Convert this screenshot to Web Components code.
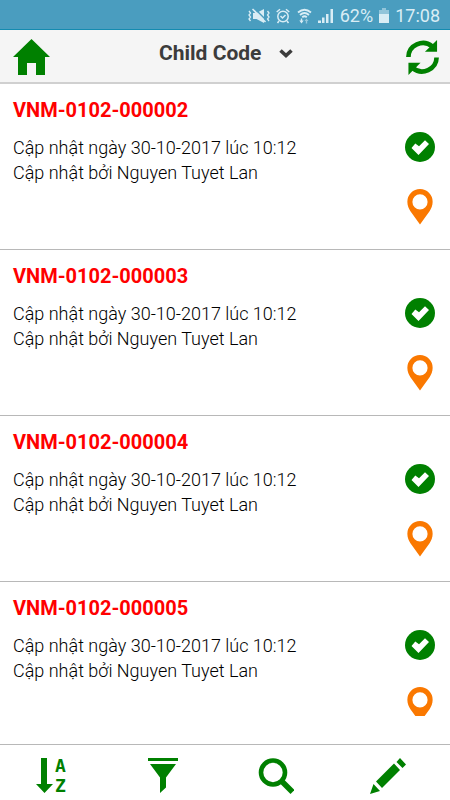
<!DOCTYPE html>
<html lang="vi">
<head>
<meta charset="utf-8">
<meta name="viewport" content="width=device-width, initial-scale=1">
<title>Child Code</title>
<style>
  html, body { height: 100%; margin: 0; }
  body { font-family: Roboto, "Noto Sans", sans-serif; color: #000; background: #fff; }
</style>
</head>
<body>
<code-app></code-app>

<script>
(function () {
  var RECORDS = ['VNM-0102-000002', 'VNM-0102-000003', 'VNM-0102-000004', 'VNM-0102-000005'];
  var RESET = ':host,*{box-sizing:border-box}svg{display:block}button{display:block;margin:0;padding:0;border:0;background:none;color:inherit;font:inherit;cursor:pointer}';

  // phone status bar: muted, alarm, wifi, signal, battery, clock
  class StatusBar extends HTMLElement {
    connectedCallback() {
      this.attachShadow({ mode: 'open' }).innerHTML = `
        <style>${RESET}
          :host { display: flex; align-items: center; justify-content: flex-end; flex: none; gap: 6px; height: 30px; padding: 2px 10px 0; background: #4a9dbf; border-bottom: 1px solid #148bb0; color: #d9edf5; font-size: 18px; line-height: 24px; }
        </style>
        <svg width="22" height="16" viewBox="0 0 22 16" fill="currentColor" aria-hidden="true">
          <path d="M5 5h3.500L16 1v14l-7.500-4H5z"/>
          <path d="M6 0l13 13" stroke="#4a9dbf" stroke-width="1.500"/>
          <path d="M4.500 1l13 13" fill="none" stroke="currentColor" stroke-width="1.600"/>
          <path d="M1 3l1.500 2L1 7l1.500 2L1 11l1.500 2M19.500 3L21 5l-1.500 2L21 9l-1.500 2 1.500 2" fill="none" stroke="currentColor" stroke-width="1.300"/>
        </svg>
        <svg width="14" height="16" viewBox="0 0 14 16" fill="none" stroke="currentColor" stroke-width="1.500" aria-hidden="true">
          <circle cx="7" cy="8.500" r="5.200"/><path d="M4.500 8l2 2L9.500 7M.7 4L4 1.200M13.300 4L10 1.200M3 13l-1.500 2M11 13l1.500 2"/>
        </svg>
        <svg width="16" height="16" viewBox="4 0 16 16" fill="none" stroke="currentColor" stroke-width="1.800" aria-hidden="true">
          <path d="M6 4.500q6.500-5.500 13 0M8 7q4.500-4 9 0M10.200 9.300q2.300-2 4.600 0"/>
          <path d="M9.500 15.500L7.300 12.500h1.500v-2h1.400v2h1.500z" fill="currentColor" stroke="none"/>
          <path d="M14.500 10.500l-2 2.500h1.300v2.500h1.400V13h1.300z" fill="currentColor" stroke="none" opacity=".55"/>
        </svg>
        <svg width="16" height="16" viewBox="0 0 16 16" fill="currentColor" aria-hidden="true">
          <path d="M0 12.500h3V15H0zM4 9.500h2.500V15H4zM8 6h2.500v9H8zM12.500 1H15v14h-2.500z"/>
        </svg>
        <span>62%</span>
        <svg width="10" height="16" viewBox="0 0 10 16" fill="currentColor" aria-hidden="true">
          <path d="M3 0h4v2H3zM0 2h10v4H0z" opacity=".5"/><path d="M0 6h10v9H0z"/>
        </svg>
        <span>17:08</span>`;
    }
  }

  class TopBar extends HTMLElement {
    connectedCallback() {
      this.attachShadow({ mode: 'open' }).innerHTML = `
        <style>${RESET}
          :host { display: grid; grid-template-columns: 1fr auto 1fr; align-items: center; flex: none; height: 54px; padding: 2px 11px 0 13px; background: #f5f5f5; border-bottom: 2px solid #d0d0d0; color: green; }
          .end { justify-self: end; }
          .start { justify-self: start; }
          label { display: flex; align-items: center; gap: 17px; padding-bottom: 8px; color: #3c3c3c; }
          select { appearance: none; margin: 0; padding: 0; border: 0; background: none; color: inherit; font: bold 21px/28px Roboto, sans-serif; }
          svg { pointer-events: none; }
        </style>
        <button class="start" aria-label="Home">
          <svg width="37" height="36" viewBox="0 0 37 36" fill="currentColor"><path d="M18.500 0L37 18h-5v18h-9V24h-9v12H5V18H0z"/></svg>
        </button>
        <label>
          <select aria-label="Code"><option>Child Code</option></select>
          <svg width="14" height="9" viewBox="0 0 14 9" fill="none" stroke="currentColor" stroke-width="3.600" aria-hidden="true"><path d="M1.500 1.500L7 6.500l5.500-5"/></svg>
        </label>
        <button class="end" aria-label="Refresh">
          <svg width="33" height="35" viewBox="0 0 34 36" fill="currentColor">
            <path d="M2.500 17.500A15 14.500 0 0 1 27 6.500" fill="none" stroke="currentColor" stroke-width="4.800"/>
            <path d="M32 0v12H19.500z"/>
            <path d="M31.500 18A15 14.500 0 0 1 7 29" fill="none" stroke="currentColor" stroke-width="4.800"/>
            <path d="M2.500 36V23.500H15z"/>
          </svg>
        </button>`;
    }
  }

  // one record; the code is slotted as title, update lines as default content
  class CodeItem extends HTMLElement {
    connectedCallback() {
      this.attachShadow({ mode: 'open' }).innerHTML = `
        <style>${RESET}
          :host { display: flex; justify-content: space-between; height: 166px; padding: 14px 15px 0 13px; border-bottom: 1px solid #b8b8b8; }
          h2 { margin: 0 0 13px; color: red; font-size: 20px; line-height: 24px; }
          .lines { font-size: 18px; font-weight: 300; line-height: 25px; }
          .marks { display: flex; flex-direction: column; align-items: center; gap: 27px; width: 30px; padding-top: 34px; }
        </style>
        <div>
          <h2><slot name="code"></slot></h2>
          <div class="lines"><slot></slot></div>
        </div>
        <div class="marks">
          <svg width="30" height="30" viewBox="0 0 30 30" role="img" aria-label="OK"><circle cx="15" cy="15" r="15" fill="green"/><path d="M6.500 16l3.800-4.500 3.700 2.800 6-6 4 3.700L13.500 23z" fill="#fff"/></svg>
          <button aria-label="Location">
            <svg width="26" height="36" viewBox="0 0 26 37"><path d="M13 0a13 13 0 0 1 13 13c0 4-1.500 7-3 9.500L13 36.500 3 22.500C1.500 20 0 17 0 13A13 13 0 0 1 13 0zm0 5.500a7.800 7.800 0 1 0 0 15.600 7.800 7.800 0 0 0 0-15.600z" fill="#fa7800"/></svg>
          </button>
        </div>`;
    }
  }

  class ToolBar extends HTMLElement {
    connectedCallback() {
      this.attachShadow({ mode: 'open' }).innerHTML = `
        <style>${RESET}
          :host { display: grid; grid-template-columns: repeat(4, 1fr); flex: none; height: 56px; border-top: 1px solid #b8b8b8; color: green; }
          button { display: flex; align-items: center; justify-content: center; padding: 6px 11px 0 0; }
          text { font: bold 18px "DejaVu Sans Mono", monospace; }
        </style>
        <button aria-label="Sort">
          <svg width="30" height="44" viewBox="0 -4 30 44" fill="currentColor"><path d="M5 0h6v26h6L8.500 35 0 26h5z"/><text x="19" y="14">A</text><text x="19" y="34">Z</text></svg>
        </button>
        <button aria-label="Filter">
          <svg width="30" height="36" viewBox="0 0 30 36" fill="currentColor"><path d="M0 0h30v3H0zM2 6h26L18 19.500v10L12 35V19.500z"/></svg>
        </button>
        <button aria-label="Search">
          <svg width="36" height="36" viewBox="0 0 36 36" fill="none" stroke="currentColor"><circle cx="15" cy="14.500" r="12" stroke-width="4.600"/><path d="M23.500 23l11 11" stroke-width="5.600"/></svg>
        </button>
        <button aria-label="Edit">
          <svg width="36" height="36" viewBox="0 0 36 36" fill="currentColor"><path d="M0 36l3.500-10 6.500 7zM6 23.500L24 5.500l6 6.500L12 30zM26.500 4L30 0l6 6.500-3.500 3.500z"/></svg>
        </button>`;
    }
  }

  class CodeApp extends HTMLElement {
    connectedCallback() {
      this.attachShadow({ mode: 'open' }).innerHTML = `
        <style>
          :host { display: flex; flex-direction: column; height: 100vh; }
          main { flex: 1; min-height: 0; margin-bottom: 28px; overflow: hidden auto; scrollbar-width: none; }
          p { margin: 0; }
        </style>
        <status-bar></status-bar>
        <top-bar></top-bar>
        <main>${RECORDS.map(function (code) {
          return `<code-item><span slot="code">${code}</span><p>Cập nhật ngày 30-10-2017 lúc 10:12</p><p>Cập nhật bởi Nguyen Tuyet Lan</p></code-item>`;
        }).join('')}</main>
        <tool-bar></tool-bar>`;
    }
  }

  customElements.define('status-bar', StatusBar);
  customElements.define('top-bar', TopBar);
  customElements.define('code-item', CodeItem);
  customElements.define('tool-bar', ToolBar);
  customElements.define('code-app', CodeApp);
})();
</script>
</body>
</html>
